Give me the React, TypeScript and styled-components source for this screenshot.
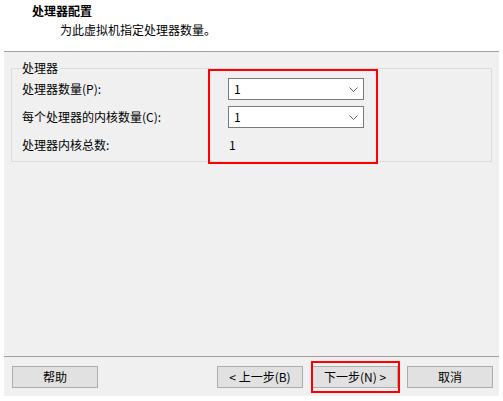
import React from 'react'
import styled, { createGlobalStyle } from 'styled-components'

const GlobalStyle = createGlobalStyle`
   html, body {
      margin: 0;
      padding: 0;
      background: #ffffff;
   }
   body {
      font-family: "Noto Sans CJK SC", "Noto Sans", sans-serif;
      font-size: 12px;
      color: #000000;
   }
`

const Dialog = styled.div`
   width: 503px;
   height: 401px;
   display: flex;
   flex-direction: column;
   background: #ffffff;
`

const Header = styled.div`
   height: 51px;
   box-sizing: border-box;
   padding: 3px 0 0 32px;
`

const Title = styled.div`
   font-weight: 700;
   line-height: 16px;
`

const Subtitle = styled.div`
   margin: 3px 0 0 28px;
   line-height: 16px;
`

const Panel = styled.div`
   position: relative;
   margin: 0 4px;
   height: 305px;
   box-sizing: border-box;
   border-top: 1px solid #a0a0a0;
   background: #f0f0f0;
   padding: 9px 7px 0 7px;
`

const GroupBox = styled.fieldset`
   margin: 0;
   padding: 0 10px 5px 10px;
   border: 1px solid #dcdcdc;
   min-width: 0;
`

const Legend = styled.legend`
   padding: 0 2px;
   margin-left: -2px;
   line-height: 14px;
`

const Rows = styled.div`
   display: grid;
   grid-template-columns: 206px 136px;
   grid-auto-rows: 22px;
   row-gap: 6px;
   margin-top: 3px;
   align-items: center;
`

const Label = styled.div`
   line-height: 16px;
`

const Combo = styled.div`
   height: 22px;
   box-sizing: border-box;
   border: 1px solid #7a7a7a;
   background: #ffffff;
   display: flex;
   align-items: center;
   justify-content: space-between;
   padding: 0 5px 0 5px;
   line-height: 16px;
`

const Value = styled.div`
   padding-left: 1px;
   line-height: 16px;
`

const Highlight = styled.div<{ $left: number; $top: number; $w: number; $h: number }>`
   position: absolute;
   left: ${p => p.$left}px;
   top: ${p => p.$top}px;
   width: ${p => p.$w}px;
   height: ${p => p.$h}px;
   box-sizing: border-box;
   border: 2px solid #ff0000;
   pointer-events: none;
`

const Footer = styled.div`
   margin: 0 4px;
   height: 40px;
   box-sizing: border-box;
   border-top: 1px solid #a0a0a0;
   background: #f0f0f0;
   padding: 9px 6px 0 8px;
   display: flex;
   align-items: flex-start;
`

const Spacer = styled.div`
   flex: 1;
`

const ButtonGroup = styled.div`
   display: flex;
   gap: 9px;
`

const ButtonWrap = styled.div`
   position: relative;
`

const Button = styled.button`
   width: 86px;
   height: 22px;
   box-sizing: border-box;
   border: 1px solid #adadad;
   background: #e1e1e1;
   font-family: inherit;
   font-size: 12px;
   line-height: 16px;
   color: #000000;
   padding: 0;
   display: block;
`

const Chevron = () => (
   <svg width="9" height="5" viewBox="0 0 9 5">
      <polyline points="0.5,0.5 4.5,4.5 8.5,0.5" fill="none" stroke="#606060" strokeWidth="1" />
   </svg>
)

const App = () => {
   return (
      <>
         <GlobalStyle />
         <Dialog>
            <Header>
               <Title>处理器配置</Title>
               <Subtitle>为此虚拟机指定处理器数量。</Subtitle>
            </Header>
            <Panel>
               <GroupBox>
                  <Legend>处理器</Legend>
                  <Rows>
                     <Label>处理器数量(P):</Label>
                     <Combo>
                        <span>1</span>
                        <Chevron />
                     </Combo>
                     <Label>每个处理器的内核数量(C):</Label>
                     <Combo>
                        <span>1</span>
                        <Chevron />
                     </Combo>
                     <Label>处理器内核总数:</Label>
                     <Value>1</Value>
                  </Rows>
               </GroupBox>
               <Highlight $left={204} $top={17} $w={170} $h={95} />
            </Panel>
            <Footer>
               <Button>帮助</Button>
               <Spacer />
               <ButtonGroup>
                  <Button>&lt; 上一步(B)</Button>
                  <ButtonWrap>
                     <Button>下一步(N) &gt;</Button>
                     <Highlight $left={-1} $top={-5} $w={89} $h={32} />
                  </ButtonWrap>
                  <Button>取消</Button>
               </ButtonGroup>
            </Footer>
         </Dialog>
      </>
   )
}

export default App
